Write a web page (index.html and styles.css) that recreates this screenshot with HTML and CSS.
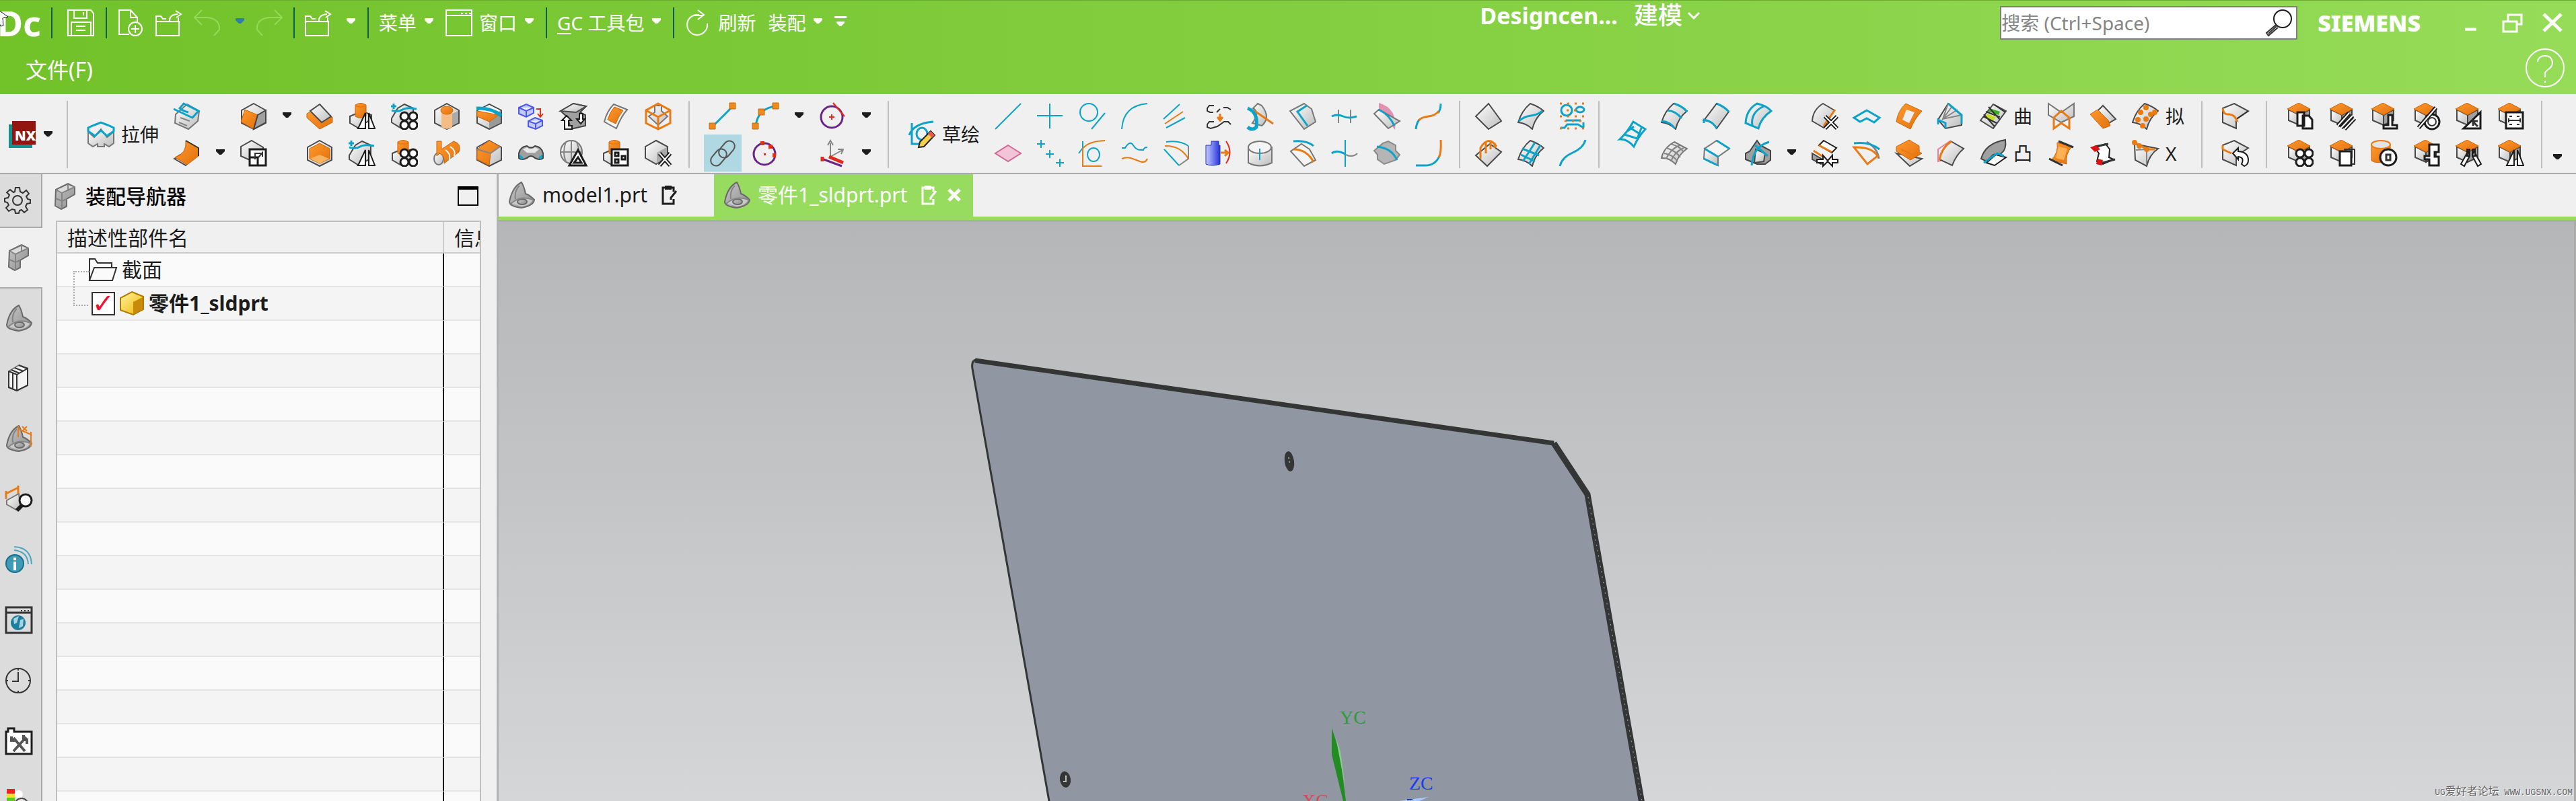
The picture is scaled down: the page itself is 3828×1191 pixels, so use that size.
FILE: index.html
```html
<!DOCTYPE html>
<html lang="zh-CN">
<head>
<meta charset="utf-8">
<title>Designcenter - 建模</title>
<link rel="stylesheet" href="styles.css">
</head>
<body>
<svg class="defs" aria-hidden="true">
  <defs>
    <linearGradient id="metal" x1="0" y1="0" x2="1" y2="1"><stop offset="0" stop-color="#fff"/><stop offset="1" stop-color="#bdbdbd"/></linearGradient>
    <linearGradient id="iron" x1="0" y1="0" x2="1" y2="1"><stop offset="0" stop-color="#c8c8c8"/><stop offset="1" stop-color="#8c8c8c"/></linearGradient>
    <linearGradient id="amber" x1="0" y1="0" x2="1" y2="1"><stop offset="0" stop-color="#ff9a2e"/><stop offset="1" stop-color="#e2700c"/></linearGradient>
    <linearGradient id="gold" x1="0" y1="0" x2="1" y2="1"><stop offset="0" stop-color="#fff3a0"/><stop offset="1" stop-color="#f0b400"/></linearGradient>
    <linearGradient id="steel" x1="0" y1="0" x2="1" y2="0"><stop offset="0" stop-color="#c6ccff"/><stop offset="1" stop-color="#2432d8"/></linearGradient>
  </defs>
  <symbol id="cube" viewBox="0 0 40 40"><path class="kg" d="M20 2 38 11V30L20 39 2 30V11Z"/><path fill="#f4f4f4" d="M20 3 36 11 20 20 4 11Z"/><path fill="#999" d="M37 12V29L20 38V20Z"/></symbol>
  <symbol id="cubeo" viewBox="0 0 40 40"><path class="kg" d="M3 10 19 18V33L3 26Z"/><path class="kd" d="M19 18 34 10V26L19 33Z"/><path class="fo" d="M18 0 35 9 19 18 1 9Z"/></symbol>
  <symbol id="hex" viewBox="0 0 40 40"><path class="kg" d="M20 1 38 11V30L20 39 2 30V11Z"/></symbol>
  <symbol id="sheet" viewBox="0 0 40 40"><path class="kg" d="M19 1Q31 5 39 12Q26 22 22 39Q13 30 1 29Q6 12 19 1Z"/></symbol>
  <symbol id="cone" viewBox="0 0 40 40"><path class="kg" d="M20 2 33 8V28L14 37 1 29V23L10 8Z"/><path class="c b" d="M1 11Q11 14 17 10T38 9M4 1V9M0 5H8"/></symbol>
  <symbol id="boss" viewBox="0 0 40 40"><path class="kg" d="M2 20 20 12 34 18V24L14 37 2 30Z"/><path class="fo" d="M10 3Q18-2 26 3V20Q18 25 10 20Z"/><path class="o" d="M10 4Q18 8 26 4"/></symbol>
  <symbol id="four" viewBox="0 0 40 40"><g class="kw b"><circle cx="20" cy="20" r="6"/><circle cx="33" cy="20" r="6"/><circle cx="20" cy="33" r="6"/><circle cx="33" cy="33" r="6"/></g></symbol>
  <symbol id="mirror" viewBox="0 0 40 40"><path class="kw" d="M25 15V38H14ZM30 15V38H39Z"/></symbol>
  <symbol id="part" viewBox="0 0 40 40"><path class="gi" d="M20 1Q6 8 2 30Q2 37 20 39Q38 36 39 27Q32 20 26 18Q24 8 20 1Z"/><path fill="#c9c9c9" d="M4 32Q18 20 37 27 32 36 20 37Z"/><ellipse class="gi" cx="21" cy="30" rx="7" ry="4"/><path class="g" d="M17 6Q9 14 11 26M4 33Q18 20 37 27"/></symbol>
  <symbol id="assy" viewBox="0 0 40 40"><path class="gi" d="M6 10 24 1 34 6V17L22 24V35L14 39 5 34Z"/><path fill="#dcdcdc" d="M8 10 24 3 32 6 15 14Z"/><path class="g" d="M6 10 15 15 34 6M15 15V38M6 23 15 27 22 24M24 1V12"/></symbol>
  <symbol id="down" viewBox="0 0 15 9"><path fill="currentColor" d="M0 0H13V3L8 8H5L0 3Z"/></symbol>
  <symbol id="open" viewBox="0 0 40 40"><path class="w" d="M1 18H35V39H1ZM1 18V10H8L11 14H16M21 18Q20 8 33 7M34 18V12M30 2 38 7 31 12"/></symbol>
  <symbol id="note" viewBox="0 0 24 30"><path class="cur" d="M18 10V4H2V28H18V21"/><path fill="currentColor" d="M5 1H15V7H5Z"/><path class="cur" d="M22 9 14 19V22"/></symbol>
</svg>

<header class="top">
  <div class="row quick">
    <span class="logo">Dc</span>
    <div class="qg first"><button aria-label="保存"><svg viewBox="0 0 40 40"><path class="w" d="M1 1H35L39 6V39H1ZM10 1V13H29V1M24 4V9M6 39V19H35V39M13 25H27M13 31H27"/></svg></button></div>
    <div class="qg files">
      <button aria-label="新建"><svg viewBox="0 0 40 40"><path class="w" d="M18 37H3V1H20L30 12V20M20 1V12H30"/><circle class="w" cx="27" cy="29" r="10"/><path class="w" d="M27 23V35M21 29H33"/></svg></button>
      <button aria-label="打开"><svg viewBox="0 0 40 40"><use href="#open"/></svg></button>
      <span class="pair"><button aria-label="撤销"><svg viewBox="0 0 40 40"><path class="dim" d="M12 1 1 12 12 23M1 12H20Q39 14 38 30L30 39"/></svg></button><button class="dd blue" aria-label="撤销列表"><svg viewBox="0 0 15 9"><use href="#down"/></svg></button></span>
      <button aria-label="重做"><svg viewBox="0 0 40 40"><path class="dim" d="M28 1 39 12 28 23M39 12H20Q1 14 2 30L10 39"/></svg></button>
    </div>
    <div class="qg"><span class="pair"><button aria-label="打开文件"><svg viewBox="0 0 40 40"><use href="#open"/></svg></button><button class="dd" aria-label="更多"><svg viewBox="0 0 15 9"><use href="#down"/></svg></button></span></div>
    <div class="qg">
      <button class="menu">菜单<svg viewBox="0 0 15 9"><use href="#down"/></svg></button>
      <button class="menu"><svg class="i" viewBox="0 0 40 40"><path class="w" d="M1 1H39V39H1ZM1 9H39M23 6H26M29 6H32M35 6H38"/></svg>窗口<svg viewBox="0 0 15 9"><use href="#down"/></svg></button>
    </div>
    <div class="qg"><button class="menu"><span><u>G</u>C 工具包</span><svg viewBox="0 0 15 9"><use href="#down"/></svg></button></div>
    <div class="qg">
      <button class="menu"><svg class="i" viewBox="0 0 40 40"><path class="w" d="M22 8H20A15 15 0 1 0 34 21M20 1 29 8 20 15M14 9H29"/></svg>刷新</button>
      <button class="menu">装配<svg viewBox="0 0 15 9"><use href="#down"/></svg></button>
      <button class="dd" aria-label="工具栏选项"><svg class="over" viewBox="0 0 18 16"><path fill="#fff" d="M0 0H18V3H0ZM3 8H15V10L10 15H8L3 10Z"/></svg></button>
    </div>
    <span class="space wide"></span>
    <h1 class="title">Designcen... <button>建模<svg viewBox="0 0 20 12"><path class="w b" d="M2 2 10 10 18 2"/></svg></button></h1>
    <span class="space"></span>
    <label class="search"><input type="text" placeholder="搜索 (Ctrl+Space)" aria-label="搜索"><svg viewBox="0 0 40 40"><circle class="kw" cx="26" cy="14" r="13"/><path class="k" d="M16 23 2 35 5 39 19 27M17 25 5 36"/></svg></label>
    <span class="brand">SIEMENS</span>
    <div class="win">
      <button aria-label="最小化"><svg viewBox="0 0 30 30"><path fill="#fff" d="M0 24H20V29H0Z"/></svg></button>
      <button aria-label="还原"><svg viewBox="0 0 30 30"><path class="w b" d="M2 13H22V28H2ZM9 13V3H29V17H22"/></svg></button>
      <button aria-label="关闭"><svg viewBox="0 0 30 30"><path class="w x" d="M2 2 28 27M28 2 2 27"/></svg></button>
    </div>
  </div>
  <div class="row second"><button class="file">文件(F)</button><button aria-label="帮助"><svg class="help" viewBox="0 0 58 58"><circle class="w" cx="29" cy="29" r="28"/><path class="w" d="M18 20Q19 11 29 11T40 21Q40 27 34 31T29 39V43M29 48V51"/></svg></button></div>
  <svg class="pointer" viewBox="0 0 14 30"><path fill="#fff" stroke="#111" d="M-12-2 12 15 4 17 5 28 1 29-4 18"/></svg>
</header>

<nav class="ribbon" aria-label="功能区">
  <div class="rg nx"><button aria-label="NX"><svg viewBox="0 0 40 40"><path fill="#11918f" d="M0 5H35V40H0Z"/><path fill="#921510" d="M5 0H40V35H5Z"/><text x="9" y="29" class="nxt">NX</text></svg></button><button class="dd" aria-label="应用"><svg viewBox="0 0 15 9"><use href="#down"/></svg></button></div>
  <div class="rg">
    <button class="big"><svg viewBox="0 0 40 40"><path class="gm" d="M1 16V33L8 38 15 34V38H25V34L32 38 39 33V16L29 24 20 12 10 24Z"/><path class="c b" d="M1 15V10L10 6 20 2 30 6 39 10V15L29 22 20 14 11 22Z"/></svg>拉伸</button>
    <div class="grid g1">
      <button aria-label="拆分体"><svg viewBox="0 0 40 40"><path class="gm" d="M3 17 20 2 38 12 36 27 22 39 2 30Z"/><path class="g" d="M10 22 24 27M8 29 20 34"/><path class="c b" d="M0 9 28 22 37 12 15 1 9 8Q14 12 22 14"/></svg></button>
      <button aria-label="旋转"><svg viewBox="0 0 40 40"><path class="kg" d="M1 28 10 22 24 30 18 38Z"/><path class="fo" d="M18 1 37 12V24L20 37 2 26Q20 20 18 1Z"/><path class="k" d="M18 1 37 12V24"/></svg></button>
      <i></i><button class="dd" aria-label="更多"><svg viewBox="0 0 15 9"><use href="#down"/></svg></button>
      <button aria-label="块"><svg viewBox="0 0 40 40"><use href="#hex"/><path class="fo" d="M7 10 26 18 20 39 1 28Z"/><path class="kd" d="M26 18 38 11V29L20 39Z"/></svg></button>
      <button aria-label="缩放"><svg viewBox="0 0 40 40"><path class="kg" d="M17 1 34 11V20L14 30 1 24V10Z"/><path class="kw b" d="M14 14H38V38H14ZM14 26H26V38"/><path class="k" d="M22 29V20H33M27 26 33 19V25"/></svg></button>
      <button class="dd" aria-label="更多"><svg viewBox="0 0 15 9"><use href="#down"/></svg></button><i></i>
      <button aria-label="倒圆角"><svg viewBox="0 0 40 40"><path class="fo" d="M1 16 8 12 24 25 39 21V29L20 39 1 22Z"/><path class="kg" d="M20 2 37 20 23 29 6 12Z"/></svg></button>
      <button aria-label="抽壳"><svg viewBox="0 0 40 40"><use href="#hex"/><path class="fo" d="M20 5 35 13V28L20 35 5 28V13Z"/><path fill="#f9b25f" d="M20 22 34 28 20 35 6 28Z"/></svg></button>
      <button aria-label="镜像凸台"><svg viewBox="0 0 40 40"><use href="#boss"/><use href="#mirror"/></svg></button>
      <button aria-label="镜像几何"><svg viewBox="0 0 40 40"><use href="#cone"/><use href="#mirror"/></svg></button>
      <button aria-label="阵列几何"><svg viewBox="0 0 40 40"><use href="#cone"/><use href="#four"/></svg></button>
      <button aria-label="阵列特征"><svg viewBox="0 0 40 40"><use href="#boss"/><use href="#four"/></svg></button>
      <button aria-label="孔"><svg viewBox="0 0 40 40"><use href="#hex"/><path fill="#aaa" d="M28 16 37 12V29L28 34Z"/><path fill="#f3bd85" d="M12 14H28V36L20 39 12 36Z"/><ellipse class="fo" cx="20" cy="11" rx="9" ry="6"/></svg></button>
      <button aria-label="螺纹"><svg viewBox="0 0 40 40"><ellipse class="gm" cx="8" cy="28" rx="7" ry="9"/><path class="fo" d="M5 2H12V14L30 2Q42 5 38 18L16 35Q18 24 9 20L5 24Z"/><path class="wl" d="M18 15Q26 20 24 30M25 10Q34 16 31 24"/></svg></button>
      <button aria-label="修剪体"><svg viewBox="0 0 40 40"><use href="#cube"/><path class="fo" d="M2 12 34 18 20 28 2 20Z"/><path class="c x" d="M1 8Q24 7 38 19"/></svg></button>
      <button aria-label="拔模"><svg viewBox="0 0 40 40"><use href="#hex"/><path class="fo" d="M20 1 36 10 22 20 20 38 2 29V14Z"/><path class="g" d="M2 14 22 20 36 10"/></svg></button>
      <button aria-label="移动对象"><svg viewBox="0 0 40 40"><path class="bl" d="M13 2 24 7V15L13 21 2 16V7ZM2 7 13 12 24 7M13 12V20M26 22 37 26V34L27 39 16 35V27ZM16 27 27 31 37 26M27 31V38"/><path class="rd" d="M28 9H34V21M30 16 34 21 38 16"/></svg></button>
      <button aria-label="桥接"><svg viewBox="0 0 40 40"><path class="kd" d="M2 20Q4 10 14 9Q20 14 26 9Q36 10 38 20V27Q34 31 26 27Q20 21 14 27Q6 31 2 27Z"/><path fill="#e8e8e8" d="M8 14 14 11Q20 16 26 11L32 14 26 19H14Z"/><path fill="#0fa3c4" d="M2 21 9 26 5 30ZM38 21 31 26 35 30Z"/></svg></button>
      <button aria-label="替换"><svg viewBox="0 0 40 40"><path class="kd" d="M1 12 20 1 39 5 30 14 38 18V34L16 39 12 22Z"/><path class="kg" d="M1 12 20 1 39 5 24 14Z"/><path class="kw" d="M7 39H18V34H13V26H17L10 19 3 26H7ZM29 16V24H25L31 31 37 24H34V16Z"/></svg></button>
      <button aria-label="球体分析"><svg viewBox="0 0 40 40"><ellipse class="gm" cx="17" cy="18" rx="16" ry="17"/><path class="g" d="M1 18H33M17 1V35M9 3Q3 18 9 33M25 3Q31 18 25 33"/><path class="kw b" d="M27 15 39 38H14ZM27 26 32 34H21Z"/></svg></button>
      <button aria-label="加厚"><svg viewBox="0 0 40 40"><path class="gw" d="M17 2 37 10Q28 20 21 38L3 28Q7 12 17 2Z"/><path class="fo" d="M18 6 31 11Q24 20 20 31L8 25Q11 14 18 6Z"/></svg></button>
      <button aria-label="特征组"><svg viewBox="0 0 40 40"><use href="#boss"/><path class="kw b" d="M14 14H38V38H14ZM19 19H24V24H19ZM19 29H24V34H19ZM29 24H34V29H29Z"/></svg></button>
      <button aria-label="包容体"><svg viewBox="0 0 40 40"><path class="gm" d="M15 4H25V12L34 20 20 33 6 20 15 14Z"/><path class="o b" d="M20 1 38 11V30L20 39 2 30V11ZM2 11 20 21 38 11M20 21V39"/></svg></button>
      <button aria-label="删除体"><svg viewBox="0 0 40 40"><path class="kg" d="M17 1 34 10V24L17 36 1 27V10Z"/><path fill="#aaa" d="M33 11V25L18 35V19Z"/><path class="kx" d="M22 20 38 38M38 20 22 38"/><path class="wl" d="M22 20 38 38M38 20 22 38"/></svg></button>
    </div>
  </div>
  <div class="rg">
    <div class="grid g2">
      <button aria-label="直线"><svg viewBox="0 0 40 40"><path class="c b" d="M5 35 35 5"/><path class="dot" d="M0 30H9V39H0ZM30 0H39V9H30Z"/></svg></button>
      <button class="on" aria-label="关联"><svg viewBox="0 0 40 40"><g fill="none" stroke="#555" stroke-width="2"><rect x="18" y="0" width="16" height="28" rx="8" transform="rotate(40 26 14)"/><rect x="6" y="12" width="16" height="28" rx="8" transform="rotate(40 14 26)"/></g></svg></button>
      <button aria-label="圆弧"><svg viewBox="0 0 40 40"><path class="c b" d="M5 35Q6 22 14 14T35 5"/><path class="dot" d="M0 30H9V39H0ZM9 9H18V18H9ZM30 0H39V9H30Z"/></svg></button>
      <button aria-label="三点圆"><svg viewBox="0 0 40 40"><circle class="pu" cx="18" cy="21" r="16"/><path fill="#d31" d="M12 2H18V8H12ZM24 7H30V13H24ZM30 20H35V26H30ZM17 20H20V23H17Z"/></svg></button>
      <button class="dd" aria-label="更多"><svg viewBox="0 0 15 9"><use href="#down"/></svg></button><i></i>
      <button aria-label="圆"><svg viewBox="0 0 40 40"><circle class="pu" cx="18" cy="21" r="16"/><path class="rd" d="M20 0 37 20M14 21H22M18 17V25"/></svg></button>
      <button aria-label="坐标系"><svg viewBox="0 0 40 40"><path class="g" d="M16 25V5M12 8 16 1 20 8M16 25 34 15M27 14 35 14 32 21"/><path class="pu" d="M6 29 33 39"/><path class="rd x" d="M4 25V32M14 25 35 34"/></svg></button>
      <button class="dd" aria-label="更多"><svg viewBox="0 0 15 9"><use href="#down"/></svg></button><button class="dd" aria-label="更多"><svg viewBox="0 0 15 9"><use href="#down"/></svg></button>
    </div>
  </div>
  <div class="rg">
    <button class="big"><svg viewBox="0 0 40 40"><path class="c b" d="M5 3V34H24M1 21Q8 3 37 1"/><ellipse class="c b" cx="20" cy="19" rx="8" ry="9"/><path fill="#f5cf45" stroke="#222" stroke-width="2" d="M33 15 39 21 23 38 15 39 17 31Z"/><path fill="#e65a50" d="M33 15 39 21 35 25 29 19Z"/></svg>草绘</button>
    <div class="grid g3">
      <button aria-label="直线"><svg viewBox="0 0 40 40"><path class="c" d="M1 39 39 1"/></svg></button>
      <button aria-label="基准平面"><svg viewBox="0 0 40 40"><path fill="#f3c4d8" stroke="#cf6a93" stroke-width="2" d="M20 8 39 20 20 32 1 20Z"/></svg></button>
      <button aria-label="点"><svg viewBox="0 0 40 40"><path class="c" d="M19 1V38M0 19H38"/></svg></button>
      <button aria-label="点集"><svg viewBox="0 0 40 40"><path class="c" d="M6 0V12M0 6H12M19 15V27M13 21H25M34 28V40M28 34H40"/></svg></button>
      <button aria-label="圆与线"><svg viewBox="0 0 40 40"><ellipse class="c" cx="15" cy="14" rx="13" ry="13"/><path class="c" d="M19 39 39 15"/></svg></button>
      <button aria-label="派生轮廓"><svg viewBox="0 0 40 40"><ellipse class="c" cx="22" cy="22" rx="9" ry="10"/><path class="c" d="M6 2V14M0 20 6 12"/><path class="o" d="M34 39H6V13Q14 2 39 1"/></svg></button>
      <button aria-label="圆弧"><svg viewBox="0 0 40 40"><path class="c" d="M1 39Q3 4 39 1"/></svg></button>
      <button aria-label="波形"><svg viewBox="0 0 40 40"><path class="c" d="M1 12H6Q13 0 18 8T30 15H33Q34 11 39 11"/><path class="o" d="M1 28Q8 25 14 27T28 32T39 28"/></svg></button>
      <button aria-label="偏置曲线"><svg viewBox="0 0 40 40"><path class="c" d="M1 24 25 2M5 37 33 22"/><path class="o" d="M3 31 30 13"/></svg></button>
      <button aria-label="曲面偏置"><svg viewBox="0 0 40 40"><path class="g" d="M38 9V28L24 38"/><path class="c" d="M5 3Q25 0 38 9M2 14 24 38"/><path class="o" d="M3 9Q26 8 38 28"/></svg></button>
      <button aria-label="简化曲线"><svg viewBox="0 0 40 40"><path class="k" d="M13 4H6L3 8V12L7 14H12M17 14 22 9M27 7H33L38 10M13 28H6L3 32V36L8 38 18 35 28 28H34L38 32"/><path class="o b" d="M22 16V25M18 21 22 26 26 21"/></svg></button>
      <button aria-label="缠绕曲线"><svg viewBox="0 0 40 40"><path fill="url(#steel)" stroke="#2432b8" d="M1 8H9V2H20V8H22V36Q10 40 1 36Z"/><path class="rd" d="M31 2Q42 18 31 35"/><path class="o b" d="M23 19H34M29 15 34 19 29 24"/></svg></button>
      <button aria-label="投影曲线"><svg viewBox="0 0 40 40"><path class="gm" d="M16 1 22 4Q36 22 22 34L8 30Q20 14 9 8Z"/><path class="o b" d="M10 11 39 31"/><path class="c x" d="M1 8Q17 14 14 36Q8 42 1 36"/></svg></button>
      <button aria-label="圆柱轴线"><svg viewBox="0 0 40 40"><path class="gm" d="M2 11V34Q19 43 37 34V11Z"/><ellipse class="gw" cx="19" cy="11" rx="17" ry="9"/><path class="c" d="M19 13V30"/></svg></button>
      <button aria-label="抽取曲线"><svg viewBox="0 0 40 40"><path class="gm" d="M22 1 33 9 39 28 22 39 1 12Z"/><path class="c b" d="M26 4 12 13 27 34"/></svg></button>
      <button aria-label="桥接曲线"><svg viewBox="0 0 40 40"><path class="gw" d="M18 6 30 14 39 30 22 39 2 17Z"/><path class="c b" d="M6 2Q26 0 36 9"/><path class="o b" d="M6 14Q26 14 36 33"/></svg></button>
      <button aria-label="修剪曲线"><svg viewBox="0 0 40 40"><path class="g" d="M11 10V30M29 10V30"/><path class="c b" d="M1 20Q9 16 18 20T38 20"/></svg></button>
      <button aria-label="分割曲线"><svg viewBox="0 0 40 40"><path class="c b" d="M1 20Q8 14 21 21"/><path class="g" d="M22 22Q32 27 39 20"/><path class="c" d="M21 0V40"/></svg></button>
      <button aria-label="截面曲线"><svg viewBox="0 0 40 40"><path fill="#e391b3" d="M8 0Q36 8 32 40L8 10Z"/><path class="gm" d="M8 10 39 27 22 38 1 16Z"/><path class="c b" d="M8 10Q24 18 31 34"/></svg></button>
      <button aria-label="相交曲线"><svg viewBox="0 0 40 40"><path class="gd" d="M14 5 22 2 33 8V16L39 22 33 30 16 36 6 29V22L1 16Z"/><path class="c b" d="M5 10Q27 12 35 30"/></svg></button>
      <button aria-label="光顺曲线"><svg viewBox="0 0 40 40"><path class="c b" d="M1 39Q2 30 6 25M38 1Q38 10 34 15"/><path class="o b" d="M5 26Q10 21 20 20T35 12"/></svg></button>
      <button aria-label="延伸曲线"><svg viewBox="0 0 40 40"><path class="c b" d="M1 38H15Q30 38 36 24"/><path class="o b" d="M35 26Q39 20 38 0"/></svg></button>
    </div>
  </div>
  <div class="rg tight">
    <div class="grid g4">
      <button aria-label="有界平面"><svg viewBox="0 0 40 40"><path class="kg" d="M20 1 39 27 20 39 1 20Z"/></svg></button>
      <button aria-label="扫掠"><svg viewBox="0 0 40 40"><path class="kg" d="M22 6 39 18 18 39 1 23Z"/><path class="o b" d="M8 28V12Q20-8 32 10M16 20V4M23 14V2M29 12V4"/></svg></button>
      <button aria-label="分割面"><svg viewBox="0 0 40 40"><use href="#sheet"/><path class="c b" d="M2 27Q10 20 20 19T37 12"/></svg></button>
      <button aria-label="网格面"><svg viewBox="0 0 40 40"><use href="#sheet"/><path class="c b" d="M8 32 26 4M17 36 34 8M7 13 32 23M5 22 26 32"/></svg></button>
      <button aria-label="曲线库"><svg viewBox="0 0 40 40"><ellipse class="c b" cx="11" cy="11" rx="8" ry="8"/><ellipse class="c b" cx="31" cy="10" rx="6" ry="4"/><path class="c b" d="M10 26H32M2 37H8L12 32H28L36 37M36 29V37"/><path class="oo" d="M1 1H38M1 20H38M1 38H38M11 11H31M8 27H38"/></svg></button>
      <button aria-label="样条"><svg viewBox="0 0 40 40"><path class="c b" d="M1 39Q4 26 20 19T39 0"/></svg></button>
    </div>
  </div>
  <div class="rg">
    <button class="big"><svg viewBox="0 0 40 40"><path class="c b" d="M21 1 39 12Q28 24 22 38 12 26 1 27Q12 17 21 1ZM8 20 27 26 34 8M11 16 22 8M15 9 32 20"/></svg></button>
    <div class="grid g5">
      <button aria-label="直纹"><svg viewBox="0 0 40 40"><use href="#sheet"/><path class="c b" d="M20 1Q31 4 39 13M10 11Q22 12 31 23M1 27Q14 28 21 38"/></svg></button>
      <button aria-label="网格"><svg viewBox="0 0 40 40"><path class="gm" d="M20 3 39 13Q26 22 22 36 12 26 1 27Q4 12 20 3Z"/><path class="g" d="M8 12Q22 16 29 26M5 20Q18 22 25 32M14 6Q28 9 34 18M8 28Q14 14 28 8M15 32Q20 18 34 12"/></svg></button>
      <button aria-label="通过曲线"><svg viewBox="0 0 40 40"><path class="kg" d="M20 1Q32 6 38 13L20 38Q13 26 1 26Z"/><path class="c b" d="M20 1Q32 6 38 13M1 30V25Q14 27 20 38"/></svg></button>
      <button aria-label="轮廓弯边"><svg viewBox="0 0 40 40"><path class="gm" d="M2 13 22 25V38L1 28Z"/><path class="gw" d="M20 1 39 13 22 25 2 13Z"/><path class="c b" d="M20 1 39 13M2 13 22 25M1 28 22 38"/></svg></button>
      <button aria-label="偏置面"><svg viewBox="0 0 40 40"><path class="cg" d="M18 1Q32 4 39 12 24 22 20 38L1 30Q2 10 18 1Z"/><path class="c b" d="M28 5Q8 14 11 34"/></svg></button>
      <button aria-label="面倒圆"><svg viewBox="0 0 40 40"><path class="kd" d="M18 1 23 8 38 16V30L30 36H18L1 29V20L7 17Z"/><path class="kg" d="M16 14 30 20 28 32 14 34Z"/><path class="c b" d="M36 3Q12 10 10 38M15 8 34 24"/></svg></button>
      <i></i><button class="dd" aria-label="更多"><svg viewBox="0 0 15 9"><use href="#down"/></svg></button>
      <button aria-label="删除面"><svg viewBox="0 0 40 40"><path class="kg" d="M17 1 34 11 18 37 1 27Q2 10 17 1Z"/><path class="o b" d="M35 10 18 34"/><path class="kx" d="M20 20 38 38M38 20 20 38"/><path class="wl" d="M20 20 38 38M38 20 20 38"/></svg></button>
      <button aria-label="缝合"><svg viewBox="0 0 40 40"><path class="kd" d="M1 20 18 30 14 36 1 29Z"/><path class="kw" d="M18 1 37 12 30 19 11 8Z"/><path class="o b" d="M11 8 30 18M3 16 17 25"/><path class="kw" d="M8 29H17V23L24 31 31 23V29H39V34H31V39L24 32 17 39V34H8Z"/></svg></button>
      <button aria-label="延伸片体"><svg viewBox="0 0 40 40"><path class="c b" d="M1 22 20 11 39 22 31 29 20 23 10 28Z"/></svg></button>
      <button aria-label="修剪片体"><svg viewBox="0 0 40 40"><path class="g b" d="M20 3Q36 12 38 28"/><path class="c b" d="M1 5Q24 2 39 14"/><path class="o b" d="M1 11Q28 10 36 24L21 36Z"/></svg></button>
      <button aria-label="扩大"><svg viewBox="0 0 40 40"><path class="fo" d="M15 1 39 12Q28 24 22 39L1 28Q3 12 15 1Z"/><path fill="#eee" d="M16 10 28 14 20 30 10 25Z"/></svg></button>
      <button aria-label="偏置曲面"><svg viewBox="0 0 40 40"><path class="kg" d="M1 20 39 28 21 39Z"/><path class="fo" d="M20 0 35 9V18L39 20 22 30 1 17V10Z"/><path class="o" d="M8 14 25 22 36 16"/></svg></button>
      <button aria-label="扇形曲面"><svg viewBox="0 0 40 40"><path class="kg" d="M16 1 36 18V33L12 38 1 25Z"/><path class="g" d="M16 1 8 24 36 18M8 24 30 10M8 24 22 5"/><path class="c b" d="M16 1 36 18V31M1 32V25L12 30V38"/></svg></button>
      <button aria-label="拉伸面"><svg viewBox="0 0 40 40"><path fill="none" stroke="#ea7ea8" stroke-width="2" d="M20 1 1 14V32L8 30"/><path class="kg" d="M20 2 39 13Q28 22 22 38L3 29Q6 12 20 2Z"/><path class="o b" d="M3 30Q6 12 21 2"/></svg></button>
      <button class="cap"><svg viewBox="0 0 40 40"><path class="kg" d="M1 26 20 2 39 12 20 38Z"/><path fill="#3fae23" d="M15 8 30 13 28 18 13 13Z"/><path fill="#c6e02a" d="M11 16 24 21 20 27 8 21Z"/><path class="k" d="M13 6 30 25M6 17 22 35M22 3 38 14M9 13 30 21M5 20 25 30"/></svg>曲</button>
      <button class="cap"><svg viewBox="0 0 40 40"><path class="kd" d="M38 0Q8 5 2 28L10 32 20 22 32 20Q40 14 38 0Z"/><path class="kw" d="M10 34 24 22 39 26 22 38Z"/><path class="c b" d="M6 34 26 20 36 24"/></svg>凸</button>
      <button aria-label="镜像面"><svg viewBox="0 0 40 40"><path class="gm" d="M1 1 20 14 39 1V20L20 29 1 18Z"/><path class="o b" d="M9 38V22L20 12 32 22V38L20 30Z"/></svg></button>
      <button aria-label="卷曲面"><svg viewBox="0 0 40 40"><path class="fo" d="M14 4 36 10Q26 20 28 36L5 30Q16 20 14 4Z"/><path class="k b" d="M16 2 38 11M2 28 22 38"/><path fill="#fdb154" d="M16 10 29 13 24 30 12 27Z"/></svg></button>
      <button aria-label="部分面"><svg viewBox="0 0 40 40"><path class="kg" d="M20 4 39 24 22 34 12 12Z"/><path class="fo" d="M12 10 28 26 31 34 20 38 1 17Z"/></svg></button>
      <button aria-label="匹配边"><svg viewBox="0 0 40 40"><path class="kw" d="M8 12 24 6 30 14 29 26 36 29 20 36 11 32 14 20Z"/><path class="k b" d="M8 10 28 6M16 35 38 29"/><path fill="#d11" d="M1 11 10 8 16 14 8 18ZM12 28 20 30 18 38 10 36Z"/></svg></button>
      <button class="cap"><svg viewBox="0 0 40 40"><use href="#sheet"/><path class="oc" d="M21 7H21M13 14H13M34 14H34M9 25H9M21 24H21M16 34H16M28 17H28"/></svg>拟</button>
      <button class="cap"><svg viewBox="0 0 40 40"><path class="kg" d="M4 6 39 13Q26 22 22 39L5 30Z"/><path class="g" d="M6 15 22 14V36"/><path class="o b" d="M4 4 14 9 22 14H34"/><path class="oc" d="M4 4H4M11 9H11M22 14H22"/></svg>X</button>
    </div>
  </div>
  <div class="rg">
    <div class="grid">
      <button aria-label="弯边"><svg viewBox="0 0 40 40"><path class="kg" d="M18 1 39 12 21 24V38L1 29V8Z"/><path class="k" d="M39 12 22 24"/><path class="o b" d="M1 8Q2 18 10 17T23 28"/></svg></button>
      <button aria-label="还原面"><svg viewBox="0 0 40 40"><path class="kg" d="M18 1 39 12 21 24V38L1 29V8Z"/><path class="o b" d="M1 8V14L14 20"/><path class="kw" d="M16 20 24 12V17Q39 18 39 30 39 37 33 39L29 36Q34 26 24 25V29Z"/></svg></button>
    </div>
  </div>
  <div class="rg">
    <div class="grid g6">
      <button aria-label="复制面"><svg viewBox="0 0 40 40"><use href="#cubeo"/><path class="kw b" d="M16 14H26V34H16ZM24 19H33L38 25V38H24Z"/></svg></button>
      <button aria-label="阵列面"><svg viewBox="0 0 40 40"><use href="#cubeo"/><use href="#four"/></svg></button>
      <button aria-label="平行面"><svg viewBox="0 0 40 40"><use href="#cubeo"/><path class="kx" d="M13 34 30 15M18 37 35 19M23 39 38 23"/><path class="wl" d="M13 34 30 15M18 37 35 19M23 39 38 23"/></svg></button>
      <button aria-label="粘贴面"><svg viewBox="0 0 40 40"><use href="#cubeo"/><path class="kw b" d="M16 17H33V38H16Z"/><path class="k" d="M22 14H38V36H34"/></svg></button>
      <button aria-label="垂直面"><svg viewBox="0 0 40 40"><use href="#cubeo"/><path class="kw b" d="M26 18H32V33H39V38H19V33H26Z"/></svg></button>
      <button aria-label="同轴面"><svg viewBox="0 0 40 40"><path class="fo" d="M1 7V31Q10 36 20 32V20L29 14V7Z"/><ellipse class="go" cx="15" cy="7" rx="14" ry="6"/><circle class="kw b" cx="26" cy="26" r="12"/><path class="k b" d="M23 22H29V30H23Z"/></svg></button>
      <button aria-label="相切面"><svg viewBox="0 0 40 40"><use href="#cubeo"/><circle class="kw b" cx="28" cy="28" r="11"/><circle class="k" cx="28" cy="28" r="6"/><path class="kx" d="M8 37 34 7"/><path class="wl" d="M8 37 34 7"/></svg></button>
      <button aria-label="共面"><svg viewBox="0 0 40 40"><use href="#cubeo"/><path class="kw b" d="M24 7H38V18H32V25H38V38H24V29H17V24H24Z"/></svg></button>
      <button aria-label="线性尺寸"><svg viewBox="0 0 40 40"><use href="#cubeo"/><path class="kw b" d="M38 14V38H13Z"/><path class="k b" d="M34 35 27 28M27 34V27H34"/></svg></button>
      <button aria-label="对称"><svg viewBox="0 0 40 40"><use href="#cubeo"/><path class="kw" d="M20 16 9 36 14 39 22 24ZM28 16 39 36 34 39 26 24ZM18 14H22V24H18ZM26 14H30V24H26Z"/></svg></button>
      <button aria-label="调整尺寸"><svg viewBox="0 0 40 40"><use href="#cubeo"/><path class="kw b" d="M13 14H38V38H13Z"/><path class="k" d="M17 26H34M17 23V29M34 23V29M18 20H22M29 20H33M18 32H22M29 32H33"/></svg></button>
      <button aria-label="镜像面"><svg viewBox="0 0 40 40"><use href="#cubeo"/><use href="#mirror"/></svg></button>
    </div>
  </div>
  <button class="dd last" aria-label="功能区选项"><svg viewBox="0 0 15 9"><use href="#down"/></svg></button>
</nav>

<main class="work">
  <nav class="rail" aria-label="资源条">
    <button class="gear" aria-label="设置"><svg viewBox="0 0 40 40"><path class="k" d="M17 1H23L24 7 28 9 33 5 37 10 33 14 35 18 39 19V24L34 25 32 29 35 34 30 38 26 34 23 35 22 39H17L16 34 12 33 7 36 3 31 7 27 5 23 1 22V17L6 16 8 12 4 8 9 4 14 8 16 7Z"/><circle class="k" cx="20" cy="20" r="7"/></svg></button>
    <button class="now" aria-label="装配导航器"><svg viewBox="0 0 40 40"><use href="#assy"/></svg></button>
    <button aria-label="部件导航器"><svg viewBox="0 0 40 40"><use href="#part"/></svg></button>
    <button aria-label="重用库"><svg viewBox="0 0 40 40"><path class="gw" d="M5 10 20 1 33 6V31L17 39 5 34Z"/><path class="k" d="M5 10 17 15V39M5 10V34L17 39 33 31V6L17 15M9 8 21 13M14 5 27 10M11 12V36M20 1 33 6"/></svg></button>
    <button aria-label="约束导航器"><svg viewBox="0 0 40 40"><use href="#part"/><path class="o" d="M19 1V18M38 10V32M19 6 38 14M25 2 32 9M32 2 25 9"/></svg></button>
    <button aria-label="视图查找"><svg viewBox="0 0 40 40"><path class="gm" d="M2 22 20 12 22 30 16 36 2 28Z"/><path class="o b" d="M1 20V8M1 12 19 3M19 0V12"/><path class="kx" d="M17 37 25 29"/><ellipse class="kw b" cx="30" cy="22" rx="9" ry="9"/></svg></button>
    <button aria-label="信息"><svg viewBox="0 0 40 40"><ellipse fill="#3e9ab5" stroke="#176f8c" stroke-width="2" cx="14" cy="26" rx="13" ry="13"/><path fill="#fff" d="M12 17H16V21H12ZM12 23H16V36H12Z"/><path fill="none" stroke="#4fa5bf" stroke-width="2" d="M13 1Q38 2 39 27M13 6Q33 8 34 27"/></svg></button>
    <button aria-label="浏览器"><svg viewBox="0 0 40 40"><path class="k b" d="M1 1H39V39H1ZM1 9H39"/><path class="k" d="M23 6H25M28 6H30M33 6H35"/><circle fill="#1c7f9f" cx="19" cy="24" r="11"/><path fill="#a9d3df" d="M12 18 20 14 17 24 13 26ZM22 20 27 18 26 29 20 32Z"/></svg></button>
    <button aria-label="历史"><svg viewBox="0 0 40 40"><circle class="k" cx="19" cy="20" r="18"/><path class="k" d="M19 7V21H10M19 2V5M19 35V38M1 20H4M34 20H37"/></svg></button>
    <button aria-label="加工工具"><svg viewBox="0 0 40 40"><path class="kw b" d="M1 6H4V1H13V6H39V39H1Z"/><path fill="none" stroke="#555" stroke-width="4" d="M12 15 29 35M31 14 12 35M9 13V19H15M27 11V18H32V24"/></svg></button>
    <button aria-label="显示"><svg viewBox="0 0 40 40"><path fill="#e22" d="M2 1H14V8H2Z"/><path fill="#fd3" d="M2 8H14V14H2Z"/><path fill="#5c2" d="M2 14H14V28H2Z"/><circle fill="#fff" cx="20" cy="9" r="6"/><circle class="kg" cx="24" cy="25" r="10"/></svg></button>
  </nav>
  <section class="panel">
    <header class="ph"><svg viewBox="0 0 40 40"><use href="#assy"/></svg><h2>装配导航器</h2><button aria-label="最大化"></button></header>
    <div class="tw">
    <table>
      <colgroup><col class="c1"><col></colgroup>
      <thead><tr><th>描述性部件名</th><th>信息</th></tr></thead>
      <tbody>
        <tr><td><div class="cell root"><svg class="fold" viewBox="0 0 42 34"><path class="k" d="M1 33V1H9L13 7H34V13M1 33H35L41 14H8Z"/></svg>截面</div></td><td></td></tr>
        <tr><td><label class="cell node"><input type="checkbox" checked><svg class="box" viewBox="0 0 36 36"><path fill="url(#gold)" stroke="#b07c00" stroke-width="2" d="M18 1 35 8V27L20 35 1 28V10Z"/><path fill="#c98a0a" d="M20 16 34 9V27L20 34Z"/></svg><b>零件1_sldprt</b></label></td><td></td></tr>
        <tr><td></td><td></td></tr><tr><td></td><td></td></tr><tr><td></td><td></td></tr><tr><td></td><td></td></tr><tr><td></td><td></td></tr>
        <tr><td></td><td></td></tr><tr><td></td><td></td></tr><tr><td></td><td></td></tr><tr><td></td><td></td></tr><tr><td></td><td></td></tr>
        <tr><td></td><td></td></tr><tr><td></td><td></td></tr><tr><td></td><td></td></tr><tr><td></td><td></td></tr><tr><td></td><td></td></tr>
      </tbody>
    </table>
    </div>
  </section>
  <section class="docs">
    <div class="tabs">
      <button class="tab"><svg viewBox="0 0 40 40"><use href="#part"/></svg>model1.prt<svg class="nt" viewBox="0 0 24 30"><use href="#note"/></svg></button>
      <div class="tab act"><svg viewBox="0 0 40 40"><use href="#part"/></svg>零件1_sldprt.prt<svg class="nt" viewBox="0 0 24 30"><use href="#note"/></svg><button aria-label="关闭"><svg class="cl" viewBox="0 0 20 20"><path class="w x" d="M2 2 18 18M18 2 2 18"/></svg></button></div>
    </div>
    <div class="view">
      <svg viewBox="0 0 3084 861" preserveAspectRatio="xMidYMin slice">
        <path fill="#9096a2" d="M703 214Q702 204 711 205L1568 328 1620 405 1699 861H818Z"/>
        <path fill="none" stroke="#333635" stroke-width="3" d="M818 861 704 218Q702 205 711 205"/>
        <path fill="none" stroke="#333635" stroke-width="7" stroke-linejoin="round" d="M708 206 1568 329"/>
        <path fill="none" stroke="#333635" stroke-width="9" stroke-linejoin="round" d="M1568 329 1618 405 1699 865"/>
        <path fill="none" stroke="#aaa" stroke-width="1" stroke-dasharray="2 6" d="M1619 409 1699 861"/>
        <ellipse fill="#333635" cx="1175" cy="356" rx="7" ry="15" transform="rotate(-8 1175 356)"/><path stroke="#999" stroke-width="2" stroke-dasharray="2 4" d="M1174 350 1176 362"/>
        <ellipse fill="#333635" cx="842" cy="829" rx="8" ry="12" transform="rotate(-8 842 829)"/><path fill="none" stroke="#bbb" stroke-width="2" d="M843 823V832H839"/>
        <path fill="#228b22" d="M1238 752 1250 790 1259 861H1255L1238 792Z"/><path fill="#8fc98f" d="M1244 766 1251 788 1258 840 1254 820Z"/>
        <path fill="#a8ccff" d="M1338 861 1382 855 1368 861Z"/><path stroke="#1b3fb0" stroke-width="2" d="M1350 859H1358"/>
        <text class="ax" x="1250" y="746" fill="#2f9a3c">YC</text>
        <text class="ax" x="1353" y="844" fill="#1c3cf0">ZC</text>
        <text class="ax" x="1194" y="870" fill="#d84a55">XC</text>
      </svg>
      <p class="mark">UG<span>爱好者论坛</span> WWW.UGSNX.COM</p>
    </div>
  </section>
</main>
</body>
</html>
```
FILE: styles.css
```css
* { box-sizing: border-box; }
body {
  margin: 0; height: 100vh; overflow: hidden;
  display: flex; flex-direction: column;
  font: 28px/36px "Noto Sans", "Noto Sans CJK SC", sans-serif;
  color: #1c1c1c; background: #f0f0f0;
}
button { border: 0; padding: 0; margin: 0; background: none; font: inherit; color: inherit; display: flex; align-items: center; }
svg { display: block; flex: none; width: 40px; height: 40px; overflow: visible; }
h1, h2, p { margin: 0; }
.defs { position: absolute; width: 0; height: 0; }

/* icon strokes and fills */
.k, .g, .c, .o, .w, .dim, .bl, .rd, .pu, .wl, .kx, .cur { fill: none; stroke-width: 2; }
.k { stroke: #333; }
.g { stroke: #858585; }
.c { stroke: #0ba3c9; }
.o { stroke: #ea7b12; }
.w { stroke: #fff; }
.dim { stroke: #93da57; }
.bl { stroke: #4858f0; fill: #c3c9ff; }
.rd { stroke: #e02a1a; }
.pu { stroke: #6a2488; stroke-width: 3; }
.wl { stroke: #fff; }
.kx { stroke: #1c1c1c; stroke-width: 6; }
.b { stroke-width: 3; }
.x { stroke-width: 5; }
.kw { fill: #fff; stroke: #1c1c1c; stroke-width: 2; }
.kg { fill: url(#metal); stroke: #4a4a4a; stroke-width: 2; }
.cg { fill: url(#metal); stroke: #0ba3c9; stroke-width: 3; }
.kd { fill: #a0a0a0; stroke: #444; stroke-width: 2; }
.gm { fill: url(#metal); stroke: #777; stroke-width: 2; }
.gi { fill: url(#iron); stroke: #6a6a6a; stroke-width: 2; }
.gd { fill: #b5b5b5; stroke: #8a8a8a; stroke-width: 2; }
.gw { fill: #f4f4f4; stroke: #777; stroke-width: 2; }
.go { fill: #e4e4e4; stroke: #ea7b12; stroke-width: 2; }
.fo { fill: url(#amber); stroke: #c9650c; stroke-width: 1; }
.dot { fill: #f08a1d; stroke: #c46a0a; }
.oo { fill: none; stroke: #ea7b12; stroke-width: 3; stroke-dasharray: 3 8; }
.oc { fill: none; stroke: #ea7b12; stroke-width: 8; stroke-linecap: round; }
.kw.b { stroke-width: 3; }
.cur { stroke: currentColor; stroke-width: 3; }
.nxt { font: 900 20px "Noto Sans", sans-serif; fill: #fff; }

/* title bar */
.top { position: relative; background: linear-gradient(90deg, #72c22a, #83ce40 50%, #96dc58); color: #fff; border-top: 1px solid #6bab34; flex: none; }
.row { display: flex; align-items: center; }
.quick { height: 65px; }
.logo { font-size: 52px; line-height: 60px; font-weight: 700; width: 76px; white-space: nowrap; text-indent: -4px; }
.qg { display: flex; align-items: center; gap: 18px; padding: 0 18px 0 17px; height: 46px; background: linear-gradient(#0d5f4f, #0d5f4f) left / 2px 100% no-repeat; flex: none; white-space: nowrap; }
.first { padding-left: 24px; padding-right: 17px; }
.files { gap: 17px; padding-right: 16px; }
.pair { display: flex; align-items: center; gap: 22px; }
.dd svg, .menu svg { width: 15px; height: 9px; }
.dd svg { margin-right: -2px; }
.qg .dd svg, .menu svg { margin-top: -4px; }
.blue { color: #2f7da8; }
.menu { gap: 12px; }
.menu svg { margin-right: -2px; }
.menu svg.i { width: 40px; height: 40px; margin: 0 -2px 0 0; }
u { text-underline-offset: 4px; }
.qg .dd svg.over { width: 18px; height: 16px; }
.space { flex: 13; }
.wide { flex: 27; }
.title { display: flex; align-items: center; gap: 24px; font-size: 34px; line-height: 44px; font-weight: 700; align-self: flex-start; white-space: nowrap; }
.title button { gap: 7px; font-size: 36px; font-weight: 500; }
.title svg { width: 20px; height: 12px; }
.search { display: flex; align-items: center; width: 442px; height: 50px; background: #fff; border: 2px solid #7f7f7f; padding-right: 6px; }
.search input { flex: 1; min-width: 0; height: 44px; border: 0; padding: 0; outline: 0; background: none; font: inherit; }
.search input::placeholder { color: #858585; opacity: 1; }
.brand { font-size: 34px; font-weight: 900; margin-left: 30px; }
.win { display: flex; gap: 30px; margin: 0 20px 0 66px; }
.win svg { width: 30px; height: 30px; }
.win button:first-child svg { width: 25px; }
.second { height: 74px; justify-content: space-between; padding: 0 17px 4px 38px; }
.file { font-size: 32px; padding-top: 6px; }
.help { width: 58px; height: 58px; }
.pointer { position: absolute; left: 0; top: 9px; width: 14px; height: 30px; overflow: hidden; }

/* ribbon */
.ribbon { display: flex; align-items: center; height: 119px; padding: 10px 0 7px; border-bottom: 2px solid #ababab; flex: none; overflow: hidden; }
.rg { display: flex; align-items: center; height: 100px; padding: 0 25px 0 29px; border-right: 2px solid #bfbfbf; flex: none; }
.nx { padding: 0 21px 0 13px; gap: 12px; }
.tight { padding: 0 18px 0 22px; }
.big { gap: 10px; margin-right: 22px; white-space: nowrap; }
.grid { display: grid; grid-auto-flow: column; grid-template-rows: 40px 40px; row-gap: 15px; justify-content: space-between; align-items: center; }
.ribbon .dd svg { margin-top: -2px; }
.g1 { width: 740px; }
.g2 { width: 240px; }
.g3 { width: 665px; }
.g4 { width: 165px; }
.g5 { width: 778px; }
.g6 { width: 353px; }
.g2 .on { background: #b0d8e2; box-shadow: 0 0 0 8px #b0d8e2; clip-path: inset(-8px -9px); }
.cap { gap: 10px; width: 78px; }
.last { align-self: flex-end; padding: 0 0 12px 16px; }

/* work area */
.work { flex: 1; min-height: 0; display: flex; }
.rail { width: 63px; flex: none; display: flex; flex-direction: column; background: #dcdcdc; overflow: hidden; }
.rail button { flex: none; height: 90px; padding-left: 8px; border-right: 2px solid #aaa; }
.rail .gear { height: 80px; padding-left: 6px; border-bottom: 2px solid #aaa; }
.rail .now { height: 88px; background: #f0f0f0; border-right-color: #f0f0f0; }
.rail .now + button { border-top: 2px solid #aaa; }
.panel { width: 675px; flex: none; display: flex; flex-direction: column; padding: 0 23px 0 20px; }
.ph { display: flex; align-items: center; height: 69px; padding: 0 4px 4px 0; }
.ph svg { margin: 0 10px 0 -6px; }
.ph h2 { flex: 1; font-size: 30px; font-weight: 500; color: #000; }
.ph button { width: 31px; height: 29px; border: 2px solid #000; border-top-width: 5px; }
.tw { flex: 1; min-height: 0; overflow: hidden; border: 2px solid #bfbfbf; border-bottom: 0; }
table { width: 100%; table-layout: fixed; border-collapse: separate; border-spacing: 0; font-size: 30px; background: #fafafa; }
.c1 { width: 575px; }
th { height: 47px; padding: 3px 0 0 15px; text-align: left; font-weight: 400; background: #f0f0f0; border-bottom: 2px solid #ccc; white-space: nowrap; overflow: hidden; line-height: 40px; }
th:first-child { border-right: 2px solid #ccc; }
td { height: 50px; padding: 0; border-bottom: 2px solid #e4e4e4; }
td:first-child { border-right: 2px solid #000; }
tbody tr:nth-child(even) { background: #f4f4f4; }
.cell { position: relative; display: flex; align-items: center; height: 48px; padding-left: 47px; gap: 7px; }
.node { padding-left: 51px; }
.cell::before { content: ""; position: absolute; left: 24px; top: 26px; width: 22px; height: 50px; border-top: 2px dotted #aaa; border-left: 2px dotted #aaa; }
.node::before { height: 0; border-left: 0; }
.fold { width: 42px; height: 34px; }
.box { width: 36px; height: 36px; }
.node b { font-weight: 700; }
.cell input { appearance: none; width: 35px; height: 35px; margin: 0; border: 2px solid #333; background: #fff; display: flex; align-items: center; justify-content: center; }
.cell input::after { content: "✓"; font: 700 40px/30px "DejaVu Sans", sans-serif; color: #f01030; }
.docs { flex: 1; min-width: 0; display: flex; flex-direction: column; border-left: 3px solid #b2b2b2; }
.tabs { display: flex; flex: none; border-bottom: 5px solid #97dc5e; height: 68px; }
.tab { display: flex; align-items: center; width: 320px; padding: 0 16px 2px 14px; gap: 11px; font-size: 30px; white-space: nowrap; }
.tab .nt { width: 24px; height: 30px; margin-left: 10px; }
.act { width: 385px; background: #97dc5e; color: #fff; }
.act button { margin-left: 4px; }
.tab .cl { width: 20px; height: 20px; }
.view { position: relative; flex: 1; min-height: 0; border-top: 3px solid #acacac; border-right: 3px solid #aaa; background: linear-gradient(#b5b6b7, #d5d6d8); overflow: hidden; }
.view svg { width: 100%; height: 100%; overflow: hidden; }
.ax { font: 28px "Liberation Serif", serif; }
.mark { position: absolute; right: 2px; bottom: 2px; font: 13px/20px "Liberation Mono", monospace; color: #666; text-shadow: 1px 1px #fff; }
.mark span { font: 16px/20px "Noto Sans CJK SC", sans-serif; }
```
